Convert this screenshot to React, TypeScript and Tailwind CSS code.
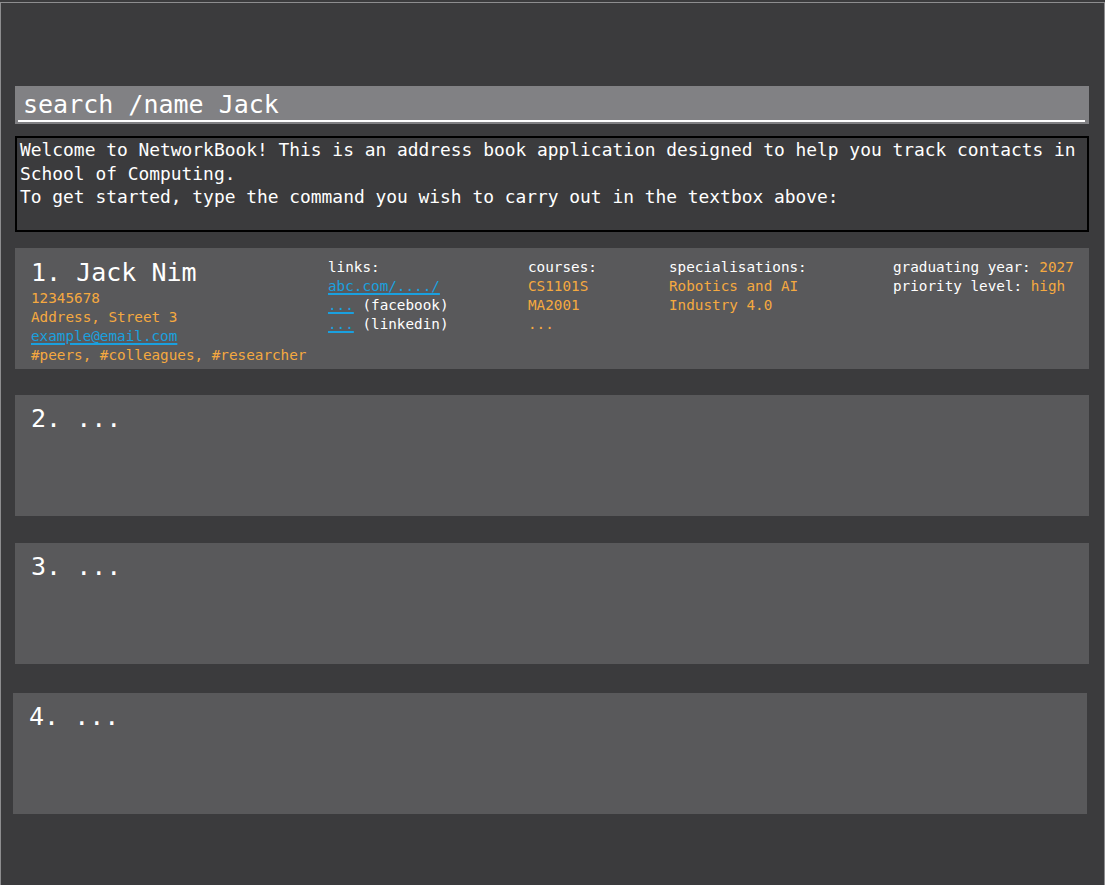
const mono = "font-['DejaVu_Sans_Mono','Liberation_Mono',monospace]"

const Orange = ({ children }: { children: React.ReactNode }) => (
  <div className="text-[#f5a940]">{children}</div>
)

const Link = ({ children }: { children: React.ReactNode }) => (
  <span className="text-[#1aa0df] underline decoration-2 underline-offset-2">{children}</span>
)

const EmptyCard = ({ n, className }: { n: number; className: string }) => (
  <div className={`h-[121px] bg-[#59595b] pl-4 pt-2 ${className}`}>
    <div className="text-[25px] leading-[32px] text-white">{n}. ...</div>
  </div>
)

export default function App() {
  return (
    <div className={`${mono} min-h-[885px] w-full bg-[#3b3b3d] pt-[2px]`}>
      <div className="min-h-[883px] border-x border-t border-[#8d8d8f] pt-[83px] pl-[14px] pr-[15px]">
        {/* command box */}
        <div className="relative h-[38px] bg-[#818184] pl-[8px]">
          <div className="text-[25px] leading-[38px] text-white">search /name Jack</div>
          <div className="absolute bottom-[2px] left-[3px] right-[4px] h-[2px] bg-white" />
        </div>

        {/* result display */}
        <div className="mt-[12px] h-[96px] border-2 border-black pl-[3px] text-[17.9px] leading-[23.5px] text-white">
          Welcome to NetworkBook! This is an address book application designed to help you track contacts in School of Computing.
          <br />
          To get started, type the command you wish to carry out in the textbox above:
        </div>

        {/* contact list */}
        <div className="mt-[16px] flex h-[121px] bg-[#59595b] pl-4 text-[14.3px] leading-[19px] text-white">
          <div className="w-[297px] pt-[9px]">
            <div className="text-[25px] leading-[32px]">1. Jack Nim</div>
            <Orange>12345678</Orange>
            <Orange>Address, Street 3</Orange>
            <div><Link>example@email.com</Link></div>
            <Orange>#peers, #colleagues, #researcher</Orange>
          </div>
          <div className="w-[200px] pt-[10px]">
            <div>links:</div>
            <div><Link>abc.com/..../</Link></div>
            <div><Link>...</Link> (facebook)</div>
            <div><Link>...</Link> (linkedin)</div>
          </div>
          <div className="w-[141px] pt-[10px]">
            <div>courses:</div>
            <Orange>CS1101S</Orange>
            <Orange>MA2001</Orange>
            <Orange>...</Orange>
          </div>
          <div className="w-[224px] pt-[10px]">
            <div>specialisations:</div>
            <Orange>Robotics and AI</Orange>
            <Orange>Industry 4.0</Orange>
          </div>
          <div className="pt-[10px]">
            <div>graduating year: <span className="text-[#f5a940]">2027</span></div>
            <div>priority level: <span className="text-[#f5a940]">high</span></div>
          </div>
        </div>

        <EmptyCard n={2} className="mt-[26px]" />
        <EmptyCard n={3} className="mt-[27px]" />
        <EmptyCard n={4} className="mt-[29px] -ml-[2px] mr-[2px]" />
      </div>
    </div>
  )
}
